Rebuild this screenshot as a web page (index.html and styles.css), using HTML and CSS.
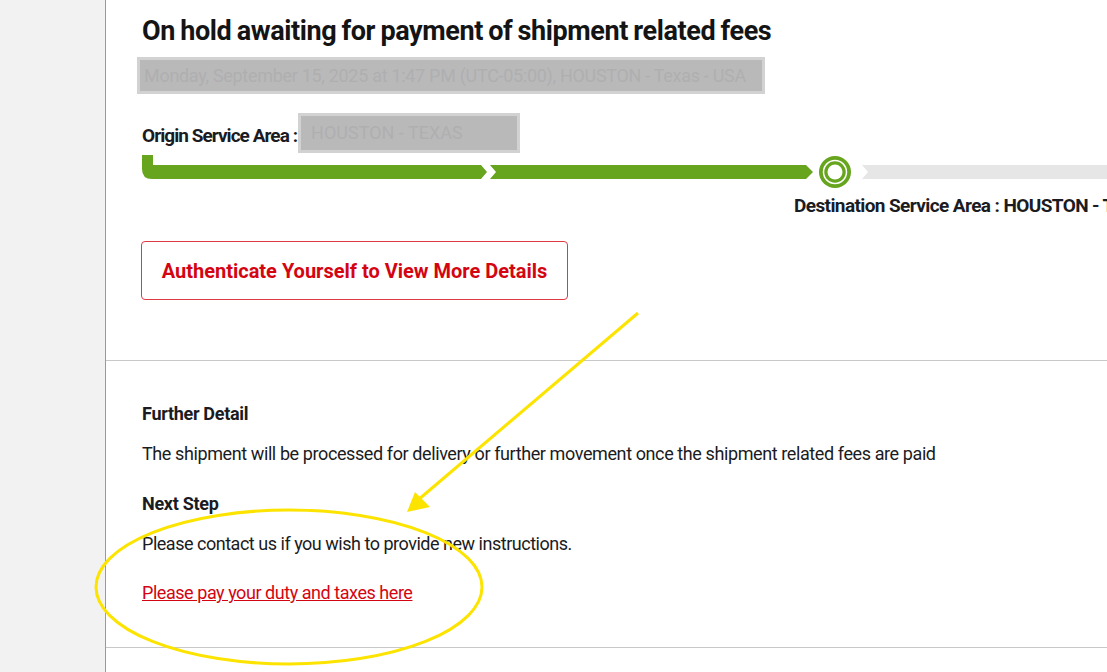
FILE: index.html
```html
<!DOCTYPE html>
<html lang="en">
<head>
<meta charset="utf-8">
<title>Shipment status</title>
<link rel="stylesheet" href="styles.css">
</head>
<body>
<div class="page">
  <aside class="rail"></aside>
  <main class="main">
    <section class="summary">
      <h1 class="title">On hold awaiting for payment of shipment related fees</h1>
      <div class="redact redact-date">Monday, September 15, 2025 at 1:47 PM (UTC-05:00), HOUSTON - Texas - USA</div>
      <div class="origin">
        <span class="origin-label">Origin Service Area :</span>
        <span class="redact redact-origin">HOUSTON - TEXAS</span>
      </div>
      <svg class="progress" width="965" height="25" viewBox="0 0 965 25">
        <path d="M0 0 H11 V10 H339 L345 17 L339 24 H10 Q0 24 0 14 Z" fill="#67a51f"/>
        <path d="M348 10 H664 L671 17 L664 24 H348 L354 17 Z" fill="#67a51f"/>
        <circle cx="693" cy="17" r="16" fill="#67a51f"/>
        <circle cx="693" cy="17" r="11.5" fill="none" stroke="#ffffff" stroke-width="1.5"/>
        <circle cx="693" cy="17" r="7.5" fill="#ffffff"/>
        <path d="M720 10 H965 V24 H720 L726 17 Z" fill="#e6e6e6"/>
      </svg>
      <div class="dest">Destination Service Area : HOUSTON - Texas - USA</div>
      <button class="auth-btn" type="button">Authenticate Yourself to View More Details</button>
    </section>
    <section class="details">
      <h2 class="sub">Further Detail</h2>
      <p class="text text-long">The shipment will be processed for delivery or further movement once the shipment related fees are paid</p>
      <h2 class="sub sub-gap">Next Step</h2>
      <p class="text">Please contact us if you wish to provide new instructions.</p>
      <a class="pay-link" href="#">Please pay your duty and taxes here</a>
    </section>
  </main>
  <svg class="annot" width="1107" height="672" viewBox="0 0 1107 672">
    <ellipse cx="289" cy="587" rx="193" ry="77" fill="none" stroke="#fce400" stroke-width="3"/>
    <line x1="638" y1="313" x2="418" y2="500" stroke="#fce400" stroke-width="3"/>
    <path d="M407 512 L415 492 L430 507 Z" fill="#fce400"/>
  </svg>
</div>
</body>
</html>
```

FILE: styles.css
```css
html, body {
  margin: 0;
  padding: 0;
  background: #ffffff;
}

.page {
  position: relative;
  display: flex;
  width: 1107px;
  height: 672px;
  overflow: hidden;
  font-family: Roboto, "Liberation Sans", sans-serif;
  color: #1b1b22;
}

.rail {
  width: 105px;
  flex: none;
  background: #f2f2f2;
  border-right: 1px solid #9a9a9a;
}

.main {
  flex: 1;
  min-width: 0;
  overflow: hidden;
}

.summary {
  padding: 13px 0 0 36px;
  height: 347px;
  border-bottom: 1px solid #c8c8c8;
  white-space: nowrap;
}

.title {
  margin: 0;
  font-size: 27px;
  line-height: 36px;
  font-weight: 700;
  color: #141414;
  letter-spacing: -0.4px;
  word-spacing: -1px;
}

.redact {
  display: block;
  background: #b9b9ba;
  border: 3px solid #d2d2d2;
  color: #afafb0;
  box-sizing: border-box;
  overflow: hidden;
}

.redact-date {
  margin: 8px 0 0 -5px;
  width: 628px;
  height: 37px;
  font-size: 18px;
  line-height: 31px;
  padding-left: 4px;
  letter-spacing: -0.3px;
}

.origin {
  display: flex;
  align-items: center;
  margin-top: 19px;
  height: 40px;
}

.origin-label {
  font-size: 19px;
  font-weight: 700;
  margin-right: 1px;
  padding-top: 4px;
  letter-spacing: -0.95px;
}

.redact-origin {
  width: 222px;
  height: 40px;
  font-size: 18px;
  line-height: 34px;
  padding-left: 10px;
}

.progress {
  display: block;
  margin-top: 2px;
  overflow: visible;
}

.dest {
  margin: 14px 0 0 652px;
  font-size: 19px;
  line-height: 24px;
  font-weight: 700;
  letter-spacing: -0.6px;
}

.auth-btn {
  display: block;
  margin-top: 23px;
  margin-left: -1px;
  width: 427px;
  height: 59px;
  background: #ffffff;
  border: 1px solid #de3a44;
  border-radius: 4px;
  color: #d40511;
  font-family: inherit;
  font-size: 20px;
  font-weight: 700;
  letter-spacing: 0;
  text-align: center;
  padding: 0;
  cursor: pointer;
}

.details {
  padding: 41px 0 0 36px;
  height: 245px;
  border-bottom: 1px solid #c8c8c8;
}

.sub {
  margin: 0;
  font-size: 18px;
  line-height: 24px;
  font-weight: 700;
  letter-spacing: -0.3px;
}

.sub-gap {
  margin-top: 26px;
}

.text {
  margin: 16px 0 0;
  font-size: 18px;
  line-height: 24px;
  font-weight: 400;
  letter-spacing: -0.48px;
}

.text-long {
  letter-spacing: -0.4px;
}

.pay-link {
  display: inline-block;
  margin-top: 25px;
  font-size: 18px;
  line-height: 24px;
  color: #d40511;
  text-decoration: underline;
  letter-spacing: -0.45px;
}

.annot {
  position: absolute;
  left: 0;
  top: 0;
  pointer-events: none;
}
```
